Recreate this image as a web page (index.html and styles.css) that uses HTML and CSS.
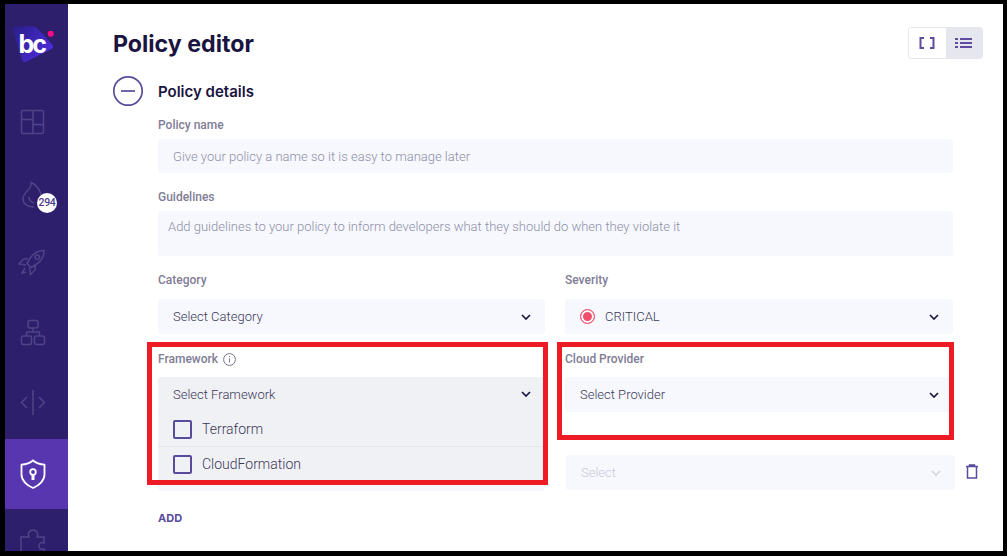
FILE: index.html
```html
<!DOCTYPE html>
<html lang="en">
<head>
    <meta charset="UTF-8">
    <title>Policy editor</title>
    <link rel="stylesheet" href="styles.css">
</head>
<body>
    <div class="frame">

        <!-- Sidebar -->
        <nav class="sidebar">
            <div class="logo">
                <svg width="63" height="85" viewBox="0 0 63 85">
                    <defs>
                        <linearGradient id="blob" x1="0" y1="0" x2="1" y2="0.6">
                            <stop offset="0" stop-color="#2a1f8c"/>
                            <stop offset="1" stop-color="#4c2bd8"/>
                        </linearGradient>
                    </defs>
                    <path d="M9 24 L27 23.500 Q30 23.500 32 25.500 L46 41 Q48 43 45 44.500 L21 56.500 Q18.500 57.500 18 55 Z" fill="url(#blob)" stroke="url(#blob)" stroke-width="2.500" stroke-linejoin="round"/>
                    <circle cx="45.700" cy="29.700" r="3" fill="#ff0a85"/>
                    <text x="13.500" y="49" class="logo-text">bc</text>
                </svg>
            </div>
            <a class="nav-item">
                <svg width="30" height="30" viewBox="0 0 30 30" class="nav-icon"><rect x="3.500" y="1.500" width="22" height="23" rx="1.500"/><path d="M15 1.500v23M3.500 10.500H15M15 15.500h10.500"/></svg>
            </a>
            <a class="nav-item">
                <svg width="30" height="30" viewBox="0 0 30 30" class="nav-icon"><path d="M13 3c1 4-1 6-3 8-3 3-5 5-5 9 0 5 5 8 11 8M13 3c5 3 9 7 10 13M11 18c0 3 2 5 5 6"/></svg>
                <span class="badge">294</span>
            </a>
            <a class="nav-item">
                <svg width="30" height="30" viewBox="0 0 30 30" class="nav-icon"><path d="M26 1.500c-6 0-11 3-14 8l-3 5 4 4 5-3c5-3 8-8 8-14zM10 9.500l-5 1-4 4.500 7 1M17.500 16l-.5 5-4.500 4.500-1-7M7 19l-3 5 4-1M19.300 6a2.200 2.200 0 1 0 .01 0z"/></svg>
            </a>
            <a class="nav-item">
                <svg width="30" height="30" viewBox="0 0 30 30" class="nav-icon"><rect x="10" y="1.500" width="10" height="7.500" rx="2"/><rect x="3.500" y="17" width="10" height="8.500" rx="2"/><rect x="16.500" y="17" width="10" height="8.500" rx="2"/><path d="M15 9v4M8.500 17v-4h13v4"/></svg>
            </a>
            <a class="nav-item">
                <svg width="30" height="30" viewBox="0 0 30 30" class="nav-icon"><path d="M9 8l-5.500 5.500L9 19M21 8l5.500 5.500L21 19M15 1v25"/></svg>
            </a>
            <a class="nav-item active">
                <svg width="30" height="30" viewBox="0 0 30 30" class="nav-icon"><path d="M15 1.500c3 2.500 7 3.800 11.500 4.200v9.800c0 6-5.500 11-11.500 13.500C9 26.500 3.500 21.500 3.500 15.500V5.700C8 5.300 12 4 15 1.500z"/><circle cx="15" cy="13" r="2.800"/><path d="M15 15.800v5.200" stroke-width="3"/></svg>
            </a>
            <a class="nav-item">
                <svg width="30" height="30" viewBox="0 0 30 30" class="nav-icon"><path d="M3 30V8h8c-2-4 1-7 4-7s6 3 4 7h7v6c-3-1-5 0-5 3s2 4 5 3v10"/></svg>
            </a>
        </nav>

        <!-- Main content -->
        <main class="content">
            <div class="page-head">
                <h1>Policy editor</h1>
                <div class="view-toggle">
                    <button class="toggle-btn">
                        <svg width="16" height="12" viewBox="0 0 16 12" class="toggle-icon"><path d="M5 1H1.500v10H5M11 1h3.500v10H11"/></svg>
                    </button>
                    <button class="toggle-btn selected">
                        <svg width="17" height="12" viewBox="0 0 17 12" class="toggle-icon"><path d="M0 2h3M5 2h12M0 6h3M5 6h12M0 10h3M5 10h12"/></svg>
                    </button>
                </div>
            </div>

            <div class="section-head">
                <svg width="32" height="32" viewBox="0 0 32 32" class="collapse-icon"><circle cx="16" cy="16" r="14.200"/><path d="M9 16h14"/></svg>
                <h2>Policy details</h2>
            </div>

            <form class="policy-form">
                <label class="field-label">Policy name</label>
                <div class="input name-input">Give your policy a name so it is easy to manage later</div>

                <label class="field-label guidelines-label">Guidelines</label>
                <div class="input guidelines-input">Add guidelines to your policy to inform developers what they should do when they violate it</div>

                <div class="form-row first-row">
                    <div class="field">
                        <label class="field-label">Category</label>
                        <div class="select">
                            <span>Select Category</span>
                            <svg width="10" height="6" viewBox="0 0 10 6" class="chevron"><path d="M1 1l4 4 4-4"/></svg>
                        </div>
                    </div>
                    <div class="field">
                        <label class="field-label">Severity</label>
                        <div class="select">
                            <span class="severity"><i class="severity-dot"></i>CRITICAL</span>
                            <svg width="10" height="6" viewBox="0 0 10 6" class="chevron"><path d="M1 1l4 4 4-4"/></svg>
                        </div>
                    </div>
                </div>

                <div class="form-row second-row">
                    <div class="field">
                        <label class="field-label">Framework
                            <svg width="13" height="13" viewBox="0 0 13 13" class="info-icon"><circle cx="6.500" cy="6.500" r="5.900"/><path d="M6.500 5.500v4M6.500 3.200v1.100"/></svg>
                        </label>
                        <div class="select-wrap">
                            <div class="dropdown">
                                <div class="dropdown-head">
                                    <span>Select Framework</span>
                                    <svg width="10" height="6" viewBox="0 0 10 6" class="chevron"><path d="M1 1l4 4 4-4"/></svg>
                                </div>
                                <div class="option"><i class="checkbox"></i>Terraform</div>
                                <div class="option"><i class="checkbox"></i>CloudFormation</div>
                            </div>
                        </div>
                    </div>
                    <div class="field">
                        <label class="field-label">Cloud Provider</label>
                        <div class="select">
                            <span>Select Provider</span>
                            <svg width="10" height="6" viewBox="0 0 10 6" class="chevron"><path d="M1 1l4 4 4-4"/></svg>
                        </div>
                    </div>
                </div>

                <div class="form-row third-row">
                    <div class="select plain-select"></div>
                    <div class="disabled-wrap">
                        <div class="select disabled">
                            <span>Select</span>
                            <svg width="10" height="6" viewBox="0 0 10 6" class="chevron"><path d="M1 1l4 4 4-4"/></svg>
                        </div>
                        <svg width="14" height="15" viewBox="0 0 14 15" class="trash-icon"><path d="M1 2.500h12M4.500 2.500V1h5v1.500M2.500 2.500v11.500h9V2.500"/></svg>
                    </div>
                </div>

                <a class="add-link">ADD</a>
            </form>
        </main>

        <!-- Red annotation boxes -->
        <div class="mark mark-left"></div>
        <div class="mark mark-right"></div>
    </div>
</body>
</html>
```

FILE: styles.css
```css
/* General Styling */
html, body {
    margin: 0;
    padding: 0;
    height: 100%;
    background: #000;
    overflow: hidden;
}

.frame {
    position: relative;
    display: flex;
    width: 998px;
    height: 547px;
    margin: 4px 0 0 5px;
    background: #fff;
    overflow: hidden;
    font-family: "Roboto", sans-serif;
}

/* Sidebar */
.sidebar {
    flex: 0 0 63px;
    background: #2d1f6b;
}

.logo {
    height: 85px;
}

.logo-text {
    font-family: "Inter", sans-serif;
    font-weight: 700;
    font-size: 25px;
    letter-spacing: -2px;
    fill: #fff;
}

.nav-item {
    position: relative;
    display: flex;
    align-items: center;
    justify-content: center;
    height: 70px;
    padding-right: 7px;
}

.nav-item.active {
    background: #5836b0;
}

.nav-icon {
    fill: none;
    stroke: #4f4488;
    stroke-width: 1.500;
}

.active .nav-icon {
    stroke: #fff;
    stroke-width: 1.800;
}

.badge {
    position: absolute;
    left: 32px;
    top: 34px;
    width: 20px;
    height: 20px;
    border-radius: 50%;
    background: #fff;
    color: #4d3d8c;
    font-size: 10.500px;
    font-weight: 500;
    line-height: 20px;
    text-align: center;
    letter-spacing: -0.300px;
}

/* Main content */
.content {
    flex: 1;
    padding: 23px 50px 0 45px;
}

.page-head {
    display: flex;
    justify-content: space-between;
    height: 33px;
}

h1 {
    margin: 0;
    font-family: "Inter", sans-serif;
    font-size: 23.200px;
    font-weight: 700;
    line-height: 34px;
    color: #1a1440;
}

.view-toggle {
    display: flex;
    width: 75px;
    height: 32px;
    box-sizing: border-box;
    border: 1px solid #e6e6ee;
    border-radius: 3px;
    overflow: hidden;
    margin-right: -30px;
}

.toggle-btn {
    flex: 1;
    display: flex;
    align-items: center;
    justify-content: center;
    padding: 0;
    border: none;
    background: #fff;
}

.toggle-btn.selected {
    background: #e6e6ee;
}

.toggle-icon {
    fill: none;
    stroke: #5f4ba0;
    stroke-width: 2;
}

.section-head {
    display: flex;
    align-items: center;
    gap: 14px;
    margin: 13px 0 0 -1px;
    height: 36px;
}

h2 {
    margin: 0;
    font-family: "Inter", sans-serif;
    font-size: 15px;
    font-weight: 600;
    color: #1a1440;
}

.collapse-icon {
    fill: none;
    stroke: #5a4a9c;
    stroke-width: 1.700;
}

/* Form */
.policy-form {
    margin-left: 45px;
}

.field-label {
    display: flex;
    align-items: center;
    gap: 5px;
    height: 14px;
    font-size: 12px;
    font-weight: 500;
    line-height: 14px;
    color: #7f7d96;
}

.input {
    box-sizing: border-box;
    background: #f6f8fe;
    border-radius: 3px;
    font-size: 13px;
    font-weight: 300;
    color: #8f8fa6;
}

.policy-form > .field-label:first-child {
    margin-top: 9px;
}

.name-input {
    height: 34px;
    margin-top: 7px;
    padding: 0 15px;
    line-height: 35px;
}

.guidelines-label {
    margin-top: 17px;
}

.guidelines-input {
    height: 45px;
    margin-top: 7px;
    padding: 8px 10px;
    line-height: 16px;
}

.form-row {
    display: grid;
    grid-template-columns: 387px 388px;
    column-gap: 20px;
}

.first-row {
    margin-top: 17px;
}

.second-row {
    margin-top: 18px;
}

.third-row {
    margin-top: -1px;
}

.select {
    display: flex;
    align-items: center;
    justify-content: space-between;
    box-sizing: border-box;
    height: 35px;
    margin-top: 12px;
    padding: 0 15px;
    background: #f6f8fe;
    border-radius: 3px;
    font-size: 13px;
    font-weight: 300;
    color: #3b3858;
}

.second-row .select {
    margin-top: 11px;
}

.chevron {
    fill: none;
    stroke: #1a1440;
    stroke-width: 1.700;
    margin-right: -1px;
}

.severity {
    display: flex;
    align-items: center;
    gap: 10px;
}

.severity-dot {
    box-sizing: border-box;
    width: 15px;
    height: 15px;
    border: 1px solid #f0506e;
    border-radius: 50%;
    background: #f0506e;
    box-shadow: inset 0 0 0 2px #fff;
}

/* Framework dropdown lies over the row below */
.select-wrap {
    position: relative;
    margin-top: 11px;
}

.dropdown {
    position: absolute;
    left: 0;
    right: 0;
    top: 0;
    z-index: 2;
    height: 105px;
    background: #f0f1f5;
    border-radius: 3px;
    font-size: 14px;
    font-weight: 300;
    color: #3b3858;
}

.dropdown-head {
    display: flex;
    align-items: center;
    justify-content: space-between;
    height: 34px;
    padding: 0 15px;
    font-size: 13px;
}

.option {
    display: flex;
    align-items: center;
    gap: 10px;
    height: 35px;
    padding: 0 15px;
    border-top: 1px solid #e4e5ec;
    box-sizing: border-box;
}

.dropdown-head + .option {
    border-top-color: #eeeff3;
}

.checkbox {
    box-sizing: border-box;
    width: 19px;
    height: 19px;
    border: 2px solid #5a4a9c;
    border-radius: 2px;
}

.info-icon {
    fill: none;
    stroke: #77758f;
    stroke-width: 1;
}

.plain-select {
    margin-top: 44px;
    height: 36px;
}

.disabled-wrap {
    position: relative;
    margin-top: 44px;
}

.select.disabled {
    width: 389px;
    height: 35px;
    margin: 0 0 0 1px;
    color: #c9c9d6;
}

.disabled .chevron {
    stroke: #d5d5e0;
}

.trash-icon {
    position: absolute;
    left: 400px;
    top: 9px;
    fill: none;
    stroke: #5a4a9c;
    stroke-width: 1.500;
}

.add-link {
    display: block;
    margin-top: 20px;
    font-family: "Inter", sans-serif;
    font-size: 11px;
    font-weight: 700;
    color: #5a4a9c;
}

/* Red annotation boxes */
.mark {
    position: absolute;
    z-index: 3;
    box-sizing: border-box;
    border: 5px solid #ed1c24;
}

.mark-left {
    left: 142px;
    top: 338px;
    width: 401px;
    height: 143px;
}

.mark-right {
    left: 552px;
    top: 338px;
    width: 397px;
    height: 98px;
}
```
